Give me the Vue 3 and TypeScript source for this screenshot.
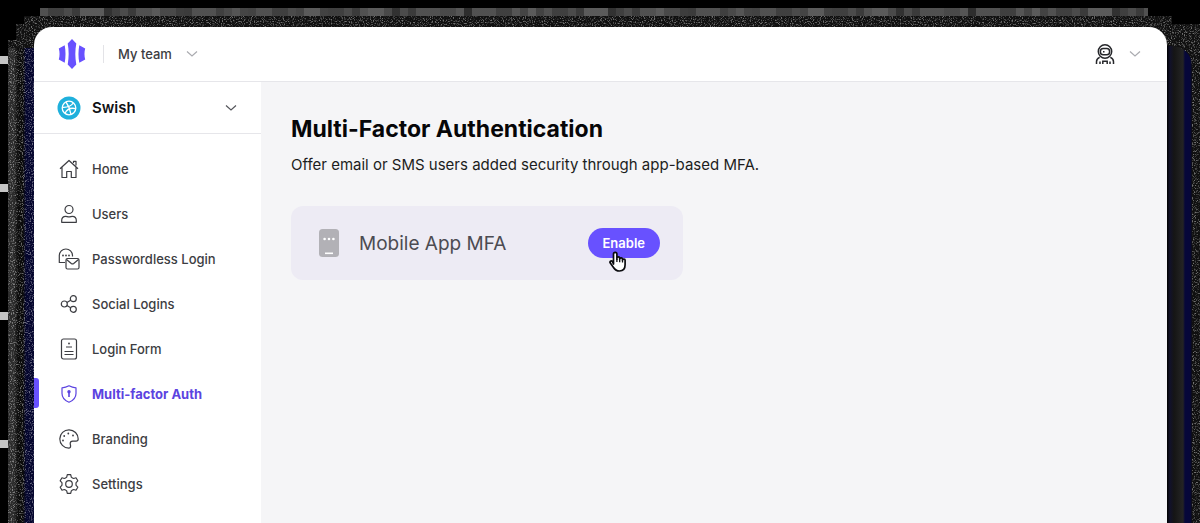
<script setup lang="ts">
import { ref } from 'vue'

interface NavItem {
  id: string
  label: string
}

const items: NavItem[] = [
  { id: 'home', label: 'Home' },
  { id: 'users', label: 'Users' },
  { id: 'passwordless', label: 'Passwordless Login' },
  { id: 'social', label: 'Social Logins' },
  { id: 'form', label: 'Login Form' },
  { id: 'mfa', label: 'Multi-factor Auth' },
  { id: 'branding', label: 'Branding' },
  { id: 'settings', label: 'Settings' },
]

const active = ref('mfa')
</script>

<template>
  <div class="stage">
    <div class="backdrop" aria-hidden="true">
      <div class="chips"></div>
      <div class="halo">
        <div class="band band-left"></div>
        <svg class="grain" width="100%" height="100%">
          <filter id="grain" x="0" y="0" width="100%" height="100%">
            <feTurbulence type="fractalNoise" baseFrequency="0.9" numOctaves="2" seed="4" />
            <feColorMatrix values="0 0 0 0 0.62  0 0 0 0 0.62  0 0 0 0 0.62  4 0 0 0 -2" />
          </filter>
          <rect width="100%" height="100%" filter="url(#grain)" />
        </svg>
        <div class="tiles"></div>
        <div class="band band-right"></div>
      </div>
    </div>

    <div class="window">
      <header class="topbar">
        <a class="brand" href="#" aria-label="Dashboard">
          <svg width="28" height="30" viewBox="0 0 28 30" fill="#6851ff">
            <path d="M14 0 18.3 4.6C17 11.5 17 18.5 18.3 25.4L14 30 9.7 25.4C11 18.5 11 11.5 9.7 4.6Z" />
            <path d="M6.7 6.2C7.8 12 7.8 18 6.7 23.8L.8 20.5C1.8 17 1.8 13 .8 9.5Z" />
            <path d="M21.3 6.2C20.2 12 20.2 18 21.3 23.8L27.2 20.5C26.2 17 26.2 13 27.2 9.5Z" />
          </svg>
        </a>
        <button class="team" type="button">
          My team
          <svg class="chev pale" width="12" height="8" viewBox="0 0 12 8"><path d="M1 1.5 6 6l5-4.5" /></svg>
        </button>
        <button class="account" type="button" aria-label="Account">
          <svg width="20" height="20" viewBox="0 0 20 20" fill="none" stroke="#26272b" stroke-width="1.5">
            <circle cx="10" cy="7.5" r="6.7" />
            <rect x="5.4" y="4.6" width="9.2" height="6.2" rx="2.8" />
            <path d="M8 7.7h1.5M1.5 20v-2.3c0-2.2 1.3-3.6 3.2-4.3M18.5 20v-2.3c0-2.2-1.3-3.6-3.2-4.3M5 20v-2.5M15 20v-2.5M7.8 20v-2.7h4.4V20" />
          </svg>
          <svg class="chev pale" width="12" height="8" viewBox="0 0 12 8"><path d="M1 1.5 6 6l5-4.5" /></svg>
        </button>
      </header>

      <div class="body">
        <aside class="sidebar">
          <button class="project" type="button">
            <svg width="24" height="24" viewBox="0 0 24 24" fill="none">
              <circle cx="12" cy="12" r="11.5" fill="#1fb0dc" />
              <g stroke="#fff" stroke-width="1.3">
                <circle cx="12" cy="12" r="6.8" />
                <path d="M9 6c2.5 3.5 4.2 7.500 5 12.300M5.300 11.300c4.500.3 8.500-.7 11-4.300M8 17.300c2-4 6-5.800 10.700-4.600" />
              </g>
            </svg>
            <span>Swish</span>
            <svg class="chev" width="12" height="8" viewBox="0 0 12 8"><path d="M1 1.5 6 6l5-4.5" /></svg>
          </button>

          <nav class="nav">
            <a
              v-for="item in items"
              :key="item.id"
              href="#"
              :class="{ active: active === item.id }"
              @click.prevent="active = item.id"
            >
              <svg class="icon" width="22" height="22" viewBox="0 0 22 22">
                <g v-if="item.id === 'home'">
                  <path d="M2 10.8 11 2.5l9 8.3M4 9.200v10.300h4.700v-6h4.600v6H18V9.200M15.500 5V3.300H18v4.200" />
                </g>
                <g v-else-if="item.id === 'users'">
                  <circle cx="11" cy="6.5" r="4" />
                  <path d="M3.700 19.300v-1.800c0-2.600 1.800-4.200 4-4.200 1.200 0 1.800.6 3.300.6s2.100-.6 3.300-.6c2.200 0 4 1.600 4 4.200v1.800Z" />
                </g>
                <g v-else-if="item.id === 'passwordless'">
                  <path d="M7 14.500H1.300V7.600a6.600 6.600 0 0 1 13.200 0v.9" />
                  <rect x="8" y="10.5" width="13" height="10.5" rx="1.5" />
                  <path d="m8.500 11.500 4.800 4c.8.600 1.600.6 2.400 0l4.800-4" />
                  <path class="dots" d="M5 7.500h.01M8 7.500h.01M11 7.500h.01" />
                </g>
                <g v-else-if="item.id === 'social'">
                  <circle cx="6.3" cy="11" r="3" />
                  <circle cx="15.3" cy="5.7" r="3" />
                  <circle cx="15.3" cy="16.3" r="3" />
                  <path d="m8.900 9.500 3.800-2.300M8.900 12.500l3.800 2.300" />
                </g>
                <g v-else-if="item.id === 'form'">
                  <rect x="3.5" y="1" width="15" height="20" rx="2" />
                  <path d="M8 9h6M6.500 13.500h9M6.500 16.500h9" />
                  <path class="dots" d="M11 5.500h.01" />
                </g>
                <g v-else-if="item.id === 'mfa'">
                  <path d="M11 2.800c2.300 1.300 4.500 1.900 7 2v5.700c0 4.400-3.200 7.200-7 8.700-3.800-1.500-7-4.300-7-8.700V4.800c2.500-.1 4.700-.7 7-2Z" />
                  <path d="M11 9v5" stroke-width="1.6" />
                  <circle class="solid" cx="11" cy="8.8" r="1.7" />
                </g>
                <g v-else-if="item.id === 'branding'">
                  <path d="M10.800 20.200A9.200 9.200 0 1 1 20.200 11c0 1.500-1 2.100-2.200 2.100h-3.300c-1.500 0-2.500 1-2.500 2.400 0 1 .4 1.500.4 2.600 0 1.300-.7 2.100-1.800 2.100Z" />
                  <path class="dots" d="M5 12.500h.01M6.200 8h.01M10.300 5.500h.01M15 7.500h.01" />
                </g>
                <g v-else>
                  <circle cx="11" cy="11" r="3.3" />
                  <path d="M9.300 1.700h3.400l.6 2.400c.8.700 1.500 1.100 2.400 1.400l2.300-.7 1.800 3-1.700 1.800c-.2 1-.2 1.800 0 2.800l1.700 1.800-1.800 3-2.300-.7c-.9.300-1.600.7-2.400 1.400l-.6 2.400H9.300l-.6-2.400c-.8-.7-1.500-1.100-2.400-1.400l-2.300.7-1.800-3 1.700-1.800c.2-1 .2-1.800 0-2.800L2.200 7.800l1.800-3 2.300.7c.9-.3 1.600-.7 2.400-1.400Z" />
                </g>
              </svg>
              {{ item.label }}
            </a>
          </nav>
        </aside>

        <main class="content">
          <h1>Multi-Factor Authentication</h1>
          <p>Offer email or SMS users added security through app-based MFA.</p>
          <section class="card">
            <svg width="20" height="28" viewBox="0 0 20 28">
              <rect width="20" height="28" rx="3.5" fill="#b2b1b6" />
              <path d="M5.600 10h.01M10 10h.01M14.400 10h.01" stroke="#fff" stroke-width="2.6" stroke-linecap="round" />
              <path d="M6 24.300h8" stroke="#fff" stroke-width="1.6" />
            </svg>
            <h2>Mobile App MFA</h2>
            <div class="action">
              <button type="button">Enable</button>
              <svg class="pointer" width="20" height="22" viewBox="0 0 20 22">
                <path
                  d="M5.500 13V3a1.700 1.700 0 0 1 3.400 0v5.200-1a1.400 1.400 0 0 1 2.800 0v1a1.400 1.400 0 0 1 2.800.2v.8a1.300 1.300 0 0 1 2.600.3v4.300c0 3.800-2.200 6.200-5.600 6.200-3.200 0-4.600-1.300-6-3.500l-3.200-4.400c-1-1.500.9-2.900 2-1.700Z"
                  fill="#fff" stroke="#0b0b0f" stroke-width="1.7" stroke-linejoin="round"
                />
                <path d="M8.900 8v3M11.700 8.500v2.800M14.500 9.500v2" stroke="#0b0b0f" stroke-width="1.3" />
              </svg>
            </div>
          </section>
        </main>
      </div>
    </div>
  </div>
</template>

<style>
body {
  margin: 0;
  background: #000;
}
</style>

<style scoped>
.stage {
  position: relative;
  display: flex;
  box-sizing: border-box;
  min-height: 100vh;
  padding: 27px 33px 0 34px;
  background: #000;
  font-family: Inter, "Liberation Sans", sans-serif;
  color: #3c3d42;
  overflow: hidden;
}
.backdrop,
.grain {
  position: absolute;
  inset: 0;
}
.chips {
  position: absolute;
  inset: 56px auto 0 0;
  width: 8px;
  background: repeating-linear-gradient(#c4c4c4 0 8px, #000 8px 128px);
}
.halo {
  position: absolute;
  inset: 8px 0 0 8px;
  background: #101010;
  clip-path: polygon(0 32px, 8px 32px, 8px 16px, 16px 16px, 16px 8px, 32px 8px, 32px 0, calc(100% - 52px) 0, calc(100% - 52px) 8px, calc(100% - 28px) 8px, calc(100% - 28px) 16px, 100% 16px, 100% 100%, 0 100%);
}
.tiles {
  position: absolute;
  inset: 0 0 auto;
  height: 8px;
  background:
    repeating-linear-gradient(90deg, #4a4a4a80 0 8px, #2a2a2a80 8px 16px, #55555580 16px 40px, #33333380 40px 56px),
    repeating-linear-gradient(90deg, #606060 0 24px, #303030 24px 32px, #4c4c4c 32px 72px);
}
.grain {
  mix-blend-mode: screen;
  opacity: 0.5;
}
.band {
  position: absolute;
}
.band-left {
  inset: 40px auto 0 0;
  width: 26px;
  background: linear-gradient(90deg, #2c2c2c 0 6px, #0b0b0b 10px 15px, #05062e 18px);
}
.band-right {
  inset: 38px 8px 0 auto;
  width: 28px;
  border-radius: 0 20px 0 0;
  background: linear-gradient(90deg, #000 0 3px, #11112a 6px, #151515 10px, #242424 19px, #06073a 21px 26px, #0d0d14);
}
.window {
  position: relative;
  flex: 1;
  display: flex;
  flex-direction: column;
  min-width: 0;
  border-radius: 18px 18px 0 0;
  background: #fff;
}
button {
  border: 0;
  background: none;
  font: inherit;
  color: inherit;
  cursor: pointer;
}
a {
  color: inherit;
  text-decoration: none;
}
.chev {
  fill: none;
  stroke: #55565b;
  stroke-width: 1.2;
}
.chev.pale {
  stroke: #aaabb0;
}
.topbar {
  display: flex;
  align-items: center;
  height: 54px;
  padding: 0 26px 0 24px;
  border-bottom: 1px solid #e6e6ea;
}
.brand {
  display: flex;
  padding-right: 17px;
}
.team {
  display: flex;
  align-items: center;
  gap: 14px;
  height: 18px;
  padding: 0 14px;
  border-left: 1px solid #e3e3e7;
  font-size: 13px;
  font-weight: 500;
}
.account {
  display: flex;
  align-items: center;
  gap: 14px;
  margin-left: auto;
  padding: 0;
}
.body {
  flex: 1;
  display: flex;
}
.sidebar {
  flex: none;
  width: 227px;
}
.project {
  display: flex;
  align-items: center;
  gap: 11px;
  width: 100%;
  height: 52px;
  padding: 0 24px 0 23px;
  border-bottom: 1px solid #e6e6ea;
  color: #111216;
  font-size: 15px;
  font-weight: 600;
}
.project .chev {
  margin-left: auto;
}
.nav {
  display: flex;
  flex-direction: column;
  padding: 12px 0;
}
.nav a {
  display: flex;
  align-items: center;
  gap: 12px;
  height: 45px;
  padding-left: 24px;
  font-size: 13px;
  font-weight: 500;
}
.nav .active {
  position: relative;
  color: #5b43e0;
  font-weight: 700;
}
.nav .active::before {
  content: "";
  position: absolute;
  left: 0;
  top: 7px;
  width: 5px;
  height: 30px;
  border-radius: 0 3px 3px 0;
  background: #6851ff;
}
.icon {
  fill: none;
  stroke: currentColor;
  stroke-width: 1.2;
  stroke-linejoin: round;
}
.icon .dots {
  stroke-width: 1.8;
  stroke-linecap: round;
}
.icon .solid {
  fill: currentColor;
  stroke: none;
}
.content {
  flex: 1;
  min-width: 0;
  padding: 32px 30px;
  background: #f5f5f7;
}
h1 {
  margin: 0;
  color: #060608;
  font-size: 23px;
  line-height: 30px;
  font-weight: 700;
}
p {
  margin: 10px 0 0;
  color: #1c1d21;
  font-size: 15px;
  line-height: 22px;
}
.card {
  display: flex;
  align-items: center;
  gap: 20px;
  box-sizing: border-box;
  max-width: 392px;
  height: 74px;
  margin-top: 30px;
  padding: 0 23px 0 28px;
  border-radius: 12px;
  background: #edebf4;
}
h2 {
  margin: 0;
  color: #4c4b52;
  font-size: 19px;
  font-weight: 400;
}
.action {
  position: relative;
  margin-left: auto;
}
.action button {
  height: 30px;
  padding: 0 15px;
  border-radius: 15px;
  background: #6851ff;
  color: #fff;
  font-size: 13px;
  font-weight: 600;
}
.pointer {
  position: absolute;
  left: 20px;
  top: 23px;
}
</style>
